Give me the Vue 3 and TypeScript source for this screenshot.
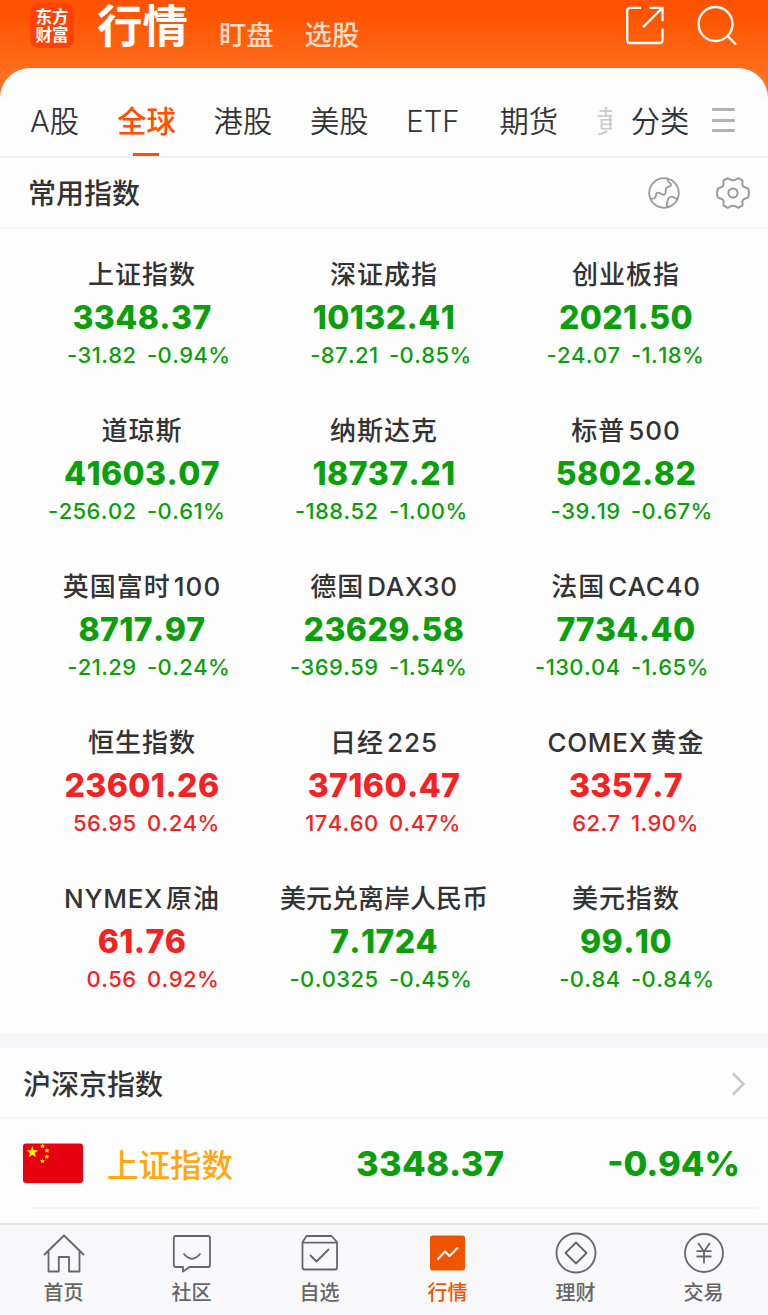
<script setup lang="ts">
interface Quote {
  name: string
  value: string
  change: string
  pct: string
  up?: boolean
}

const quotes: Quote[] = [
  { name: '上证指数', value: '3348.37', change: '-31.82', pct: '-0.94%' },
  { name: '深证成指', value: '10132.41', change: '-87.21', pct: '-0.85%' },
  { name: '创业板指', value: '2021.50', change: '-24.07', pct: '-1.18%' },
  { name: '道琼斯', value: '41603.07', change: '-256.02', pct: '-0.61%' },
  { name: '纳斯达克', value: '18737.21', change: '-188.52', pct: '-1.00%' },
  { name: '标普500', value: '5802.82', change: '-39.19', pct: '-0.67%' },
  { name: '英国富时100', value: '8717.97', change: '-21.29', pct: '-0.24%' },
  { name: '德国DAX30', value: '23629.58', change: '-369.59', pct: '-1.54%' },
  { name: '法国CAC40', value: '7734.40', change: '-130.04', pct: '-1.65%' },
  { name: '恒生指数', value: '23601.26', change: '56.95', pct: '0.24%', up: true },
  { name: '日经225', value: '37160.47', change: '174.60', pct: '0.47%', up: true },
  { name: 'COMEX黄金', value: '3357.7', change: '62.7', pct: '1.90%', up: true },
  { name: 'NYMEX原油', value: '61.76', change: '0.56', pct: '0.92%', up: true },
  { name: '美元兑离岸人民币', value: '7.1724', change: '-0.0325', pct: '-0.45%' },
  { name: '美元指数', value: '99.10', change: '-0.84', pct: '-0.84%' },
]

const tabs = ['A股', '全球', '港股', '美股', 'ETF', '期货']
const activeTab = '全球'

const nameParts = (name: string): string[] => name.match(/[A-Z0-9]+|[^A-Z0-9]+/g) ?? [name]

const navItems = ['首页', '社区', '自选', '行情', '理财', '交易']
const activeNav = '行情'
</script>

<template>
  <div class="page">
    <header class="top">
      <div class="logo"><span>东方</span><span>财富</span></div>
      <h1>行情</h1>
      <span class="link first">盯盘</span>
      <span class="link">选股</span>
      <svg class="share" width="40" height="40" viewBox="0 0 40 40" fill="none" stroke="#fff" stroke-width="2.3">
        <path d="M16 2.800H5Q2.200 2.800 2.200 5.500V35Q2.200 38 5 38H34.500Q37.500 38 37.500 35V23.500M24.500 2.800H37.500V16M37 3.300L18 22.300" />
      </svg>
      <svg class="search" width="40" height="41" viewBox="0 0 40 41" fill="none" stroke="#fff" stroke-width="2.4">
        <circle cx="18.500" cy="19" r="17" />
        <path d="M30.500 31L39 39.500" />
      </svg>
    </header>

    <main class="sheet">
      <nav class="tabs">
        <span v-for="t in tabs" :key="t" class="tab" :class="{ on: t === activeTab, latin: t === 'ETF', a: t === 'A股' }">{{ t }}</span>
        <span class="tab cut">黄</span>
        <span class="tab cat">分类</span>
        <span class="burger"><i></i><i></i><i></i></span>
      </nav>

      <section class="head">
        <h2>常用指数</h2>
        <svg class="globe" width="34" height="34" viewBox="0 0 34 34" fill="none" stroke="#999" stroke-width="1.8" stroke-linecap="round" stroke-linejoin="round">
          <circle cx="17" cy="17" r="14.800" />
          <path d="M20.500 3C20.500 7 24.500 6.500 24 9.200C23.500 11 18.800 10.500 18.800 13.500C18.800 17.500 18.300 19.500 15.300 18.500C12 16 9.300 16 9 18.800C8.700 21.500 8 23 3.800 22.500" />
          <path d="M20.500 31.200C18.300 29.300 20.500 27 20.700 24.500C21.200 21 24.500 19.800 27 21.500C28.500 22.500 29 22.800 30.300 22.500" />
        </svg>
        <svg class="gear" width="36" height="36" viewBox="0 0 36 36" fill="none" stroke="#999" stroke-width="2" stroke-linejoin="round">
          <path d="M12.300 3.300C13.900 2.700 14.700 5.300 18 5.300C21.300 5.300 22.100 2.700 23.700 3.300L27.200 5.300C28.500 6.400 26.400 8.300 27.800 10.700C29.300 13.100 33.100 12.400 33.500 14.300C34.100 16.800 34.100 19.200 33.500 21.700C33.100 23.600 29.300 22.900 27.800 25.300C26.400 27.700 28.500 29.600 27.200 30.700L23.700 32.700C22.100 33.300 21.300 30.700 18 30.700C14.700 30.700 13.900 33.300 12.300 32.700L8.800 30.700C7.500 29.600 9.600 27.700 8.200 25.300C6.700 22.900 2.900 23.600 2.500 21.700C1.900 19.200 1.900 16.800 2.500 14.300C2.900 12.400 6.700 13.100 8.200 10.700C9.600 8.300 7.500 6.400 8.800 5.300Z" />
          <circle cx="18" cy="18" r="4.600" />
        </svg>
      </section>

      <section class="grid">
        <article v-for="q in quotes" :key="q.name" class="quote" :class="{ up: q.up }">
          <div class="name" :class="{ long: q.name.length > 7 && q.name.startsWith('美元') }"><span v-for="p in nameParts(q.name)" :key="p" :class="{ en: /[A-Z]/.test(p) }">{{ p }}</span></div>
          <div class="value">{{ q.value }}</div>
          <div class="delta"><span>{{ q.change }}</span><span>{{ q.pct }}</span></div>
        </article>
      </section>

      <section class="market">
        <div class="market-head">
          <h2>沪深京指数</h2>
          <svg width="16" height="26" viewBox="0 0 16 26" fill="none" stroke="#c8c8c8" stroke-width="2.500">
            <path d="M2 2.500L12.500 13L2 23.500" />
          </svg>
        </div>
        <div class="row">
          <svg class="flag" width="60" height="40" viewBox="0 0 60 40">
            <rect y="0.500" width="60" height="39.500" rx="3" fill="#e60010" />
            <g fill="#fff000">
              <path d="M9.300 3L10.800 7.200L15.200 7.300L11.700 10L13 14.300L9.300 11.800L5.600 14.300L6.900 10L3.400 7.300L7.800 7.200Z" />
              <path id="s" d="M19.500 0.800L20.300 2.200L21.900 2.500L20.800 3.700L21 5.300L19.500 4.600L18 5.300L18.200 3.700L17.100 2.500L18.700 2.200Z" />
              <use href="#s" x="4.500" y="4.300" />
              <use href="#s" x="4.300" y="10.500" />
              <use href="#s" x="0" y="14.700" />
            </g>
          </svg>
          <span class="row-name">上证指数</span>
          <span class="row-value">3348.37</span>
          <span class="row-pct">-0.94%</span>
        </div>
        <div class="rule"></div>
      </section>
    </main>

    <footer class="nav">
      <div v-for="(n, i) in navItems" :key="n" class="item" :class="{ on: n === activeNav }">
        <svg width="44" height="44" viewBox="0 0 44 44" fill="none" stroke="#666" stroke-width="1.800" stroke-linejoin="round">
          <path v-if="i === 0" d="M2 24L22 4.500L42 24M6.500 20V40.500H16.800V26H27V40.500H37.500V20" />
          <template v-else-if="i === 1">
            <path d="M5.500 5H38Q40 5 40 7V34Q40 36 38 36H19.500L13 40.500V36H5.500Q3.800 36 3.800 34V7Q3.800 5 5.500 5Z" />
            <path d="M13.500 22.500Q22 33 30.500 22.500" />
          </template>
          <template v-else-if="i === 2">
            <path d="M8.500 5H33.500L39 11V36.500Q39 38.500 37 38.500H6Q4.500 38.500 4.500 36.500V11ZM4.500 11.700H39" />
            <path d="M12 24L18.500 30.500L31 18" />
          </template>
          <template v-else-if="i === 3">
            <rect x="4" y="4.500" width="35" height="35" rx="2.500" fill="#ee5500" stroke="none" />
            <path d="M11.500 28.500L19 20.500L23.500 25L32 16.500" stroke="#fff" stroke-width="2" />
          </template>
          <template v-else-if="i === 4">
            <circle cx="22" cy="22" r="19.500" />
            <path d="M22 11.500L32.500 22L22 32.500L11.500 22Z" />
          </template>
          <template v-else>
            <circle cx="22" cy="22" r="19" />
            <path d="M16 12L22 20.500L28 12M22 20.500V32.500M14.500 20.200H29.500M14.500 25.500H29.500" />
          </template>
        </svg>
        <span>{{ n }}</span>
      </div>
    </footer>
  </div>
</template>

<style>
body {
  margin: 0;
  background: #fdfdfd;
}
</style>

<style scoped>
.page {
  width: 768px;
  height: 1315px;
  overflow: hidden;
  display: flex;
  flex-direction: column;
  background: linear-gradient(#ff5200 0, #ff5400 15px, #ff7020 76px, #ff7020 110px, #fdfdfd 110px);
  font-family: Inter, 'Noto Sans CJK SC', sans-serif;
  color: #333;
}
h1,
h2 {
  margin: 0;
}
svg {
  display: block;
  flex: none;
}
.top {
  display: flex;
  height: 68px;
  flex: none;
  color: #fff;
  white-space: nowrap;
}
.logo {
  width: 44px;
  height: 45px;
  margin: 3px 0 0 30px;
  border-radius: 9px;
  background: #ff4308;
  display: flex;
  flex-direction: column;
  align-items: center;
  justify-content: center;
  font-size: 16.5px;
  line-height: 18px;
  font-weight: 700;
}
.top h1 {
  width: 98px;
  margin-left: 23px;
  font-size: 45.5px;
  font-weight: 700;
  line-height: 54px;
}
.link {
  font-size: 27.3px;
  line-height: 28px;
  margin: 22px 0 0 31px;
  color: #ffdcc8;
  font-weight: 500;
}
.link.first {
  margin-left: 24px;
}
.share {
  margin: 5px 0 0 auto;
}
.search {
  margin: 5px 31px 0 32px;
}
.sheet {
  flex: 1;
  min-height: 0;
  background: #fdfdfd;
  border-radius: 30px 30px 0 0;
}
.tabs {
  height: 88px;
  display: flex;
  border-bottom: 2px solid #f0f0f2;
  font-size: 29.3px;
  line-height: 36px;
  font-weight: 350;
  white-space: nowrap;
}
.tab {
  width: 58px;
  height: 88px;
  box-sizing: border-box;
  padding-top: 36px;
  margin-right: 38.3px;
  flex: none;
}
.tab.a {
  width: 49px;
  margin-left: 30px;
}
.tab.latin {
  width: 55px;
}
.tab.on {
  color: #ff5000;
  font-weight: 500;
  background: linear-gradient(#ff5000, #ff5000) 16px 85px / 26px 4px no-repeat;
}
.tab.cut {
  width: 16px;
  overflow: hidden;
  color: #ccc;
  margin-right: 19px;
}
.tab.cat {
  margin-right: 23px;
}
.burger {
  width: 23px;
  height: 24px;
  margin-top: 40px;
  display: flex;
  flex-direction: column;
  justify-content: space-between;
}
.burger i {
  height: 3px;
  border-radius: 1px;
  background: #b3b3b3;
}
.head {
  height: 69px;
  display: flex;
  align-items: center;
  border-bottom: 2px solid #f7f7f9;
}
h2 {
  font-size: 28px;
  font-weight: 500;
  line-height: 40px;
}
.head h2 {
  margin: 3px 0 0 28px;
}
.globe {
  margin-left: auto;
}
.gear {
  margin: 0 17px 0 34px;
}
.grid {
  display: grid;
  grid-template-columns: repeat(3, 242px);
  grid-auto-rows: 156px;
  padding: 26px 21px 0;
  height: 778px;
}
.quote {
  color: #0b9f0b;
  text-align: center;
  white-space: nowrap;
}
.quote.up {
  color: #f42222;
}
.name {
  display: flex;
  justify-content: center;
  gap: 3px;
  color: #333;
  font-size: 26px;
  font-weight: 500;
  letter-spacing: 1px;
  line-height: 40px;
}
.name .en {
  letter-spacing: 0.7px;
}
.name.long {
  letter-spacing: 0;
}
.value {
  font-size: 32px;
  font-weight: 800;
  line-height: 44px;
  margin-top: 1px;
  letter-spacing: 0.4px;
  font-kerning: none;
}
.delta {
  display: grid;
  grid-template-columns: 115.5px 1fr;
  column-gap: 10.5px;
  font-size: 22px;
  font-weight: 500;
  line-height: 32px;
  margin-top: -1px;
  letter-spacing: 0.4px;
  font-kerning: none;
}
.delta span:first-child {
  text-align: right;
}
.delta span:last-child {
  text-align: left;
}
.market {
  border-top: 15px solid #f5f6f9;
}
.market-head {
  height: 69px;
  display: flex;
  align-items: center;
  justify-content: space-between;
  padding: 0 21px 0 23px;
  border-bottom: 2px solid #f5f5f7;
}
.market-head h2 {
  margin-top: 5px;
}
.market-head svg {
  margin-top: 2px;
}
.row {
  height: 88px;
  display: flex;
  align-items: center;
  margin: 0 9px 0 23px;
}
.rule {
  height: 2px;
  margin: 0 9px 0 30px;
  background: #f5f5f7;
}
.row-name {
  width: 249px;
  margin-left: 24px;
  font-size: 31.5px;
  font-weight: 500;
  color: #ffa70f;
}
.row-value,
.row-pct {
  font-size: 34.5px;
  font-weight: 800;
  color: #0b9f0b;
  padding-top: 1px;
  letter-spacing: 0.4px;
}
.row-pct {
  margin-left: auto;
  margin-right: 19px;
  letter-spacing: 0;
}
.nav {
  height: 92px;
  flex: none;
  display: grid;
  grid-template-columns: repeat(6, 128px);
  background: #f8f8fa;
  border-top: 2px solid #e6e6e8;
  box-sizing: border-box;
}
.item {
  display: flex;
  flex-direction: column;
  align-items: center;
  padding-top: 6px;
  font-size: 20px;
  font-weight: 500;
  line-height: 37px;
  color: #666;
}
.item span {
  margin-right: 1px;
}
.item.on {
  color: #ee5500;
}
</style>
